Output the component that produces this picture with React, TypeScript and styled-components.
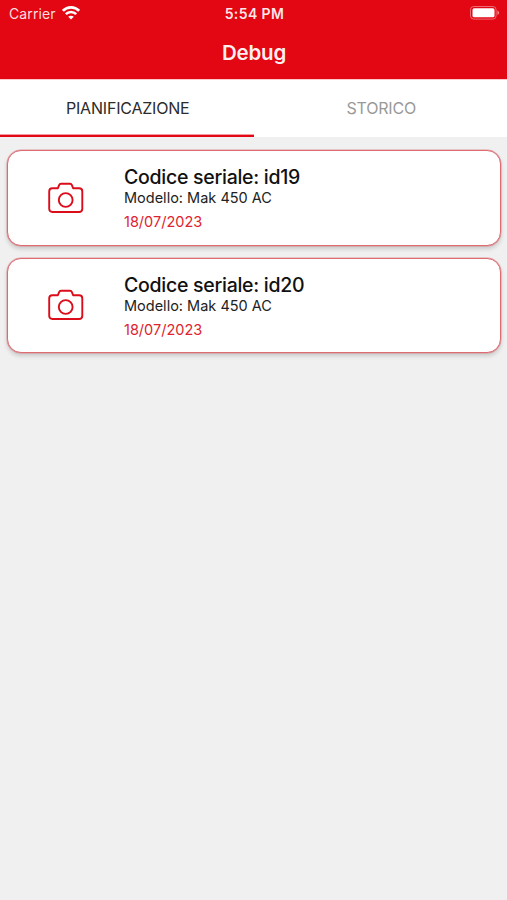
import { FunctionComponent } from 'react';
import styled, { createGlobalStyle, ThemeProvider } from 'styled-components';

const theme = {
    fonts: {
        base: `Inter, 'Liberation Sans', sans-serif`,
    },
    colors: {
        primary: '#e30613',
        background: '#f0f0f0',
        icon: '#dc0d1b',
        date: '#e0222e',
        border: '#dc6b72',
    },
};

const reports = [
    { serial: 'id19', model: 'Mak 450 AC', date: '18/07/2023' },
    { serial: 'id20', model: 'Mak 450 AC', date: '18/07/2023' },
];

const WifiIcon: FunctionComponent = () => (
    <svg width="18" height="14" viewBox="0 0 18 14" fill="none" stroke="#fff" strokeWidth="2.6">
        <path d="M0.9 4.8C5.3 0.2 12.7 0.2 17.1 4.8" />
        <path d="M3.8 8.2C6.7 5.3 11.3 5.3 14.2 8.2" />
        <path d="M9 13.6L6.2 10.8C7.8 9.4 10.2 9.4 11.8 10.8Z" fill="#fff" stroke="none" />
    </svg>
);

const BatteryIcon: FunctionComponent = () => (
    <svg width="30" height="14" viewBox="0 0 30 14">
        <rect x="0.5" y="0.5" width="25.6" height="12.6" rx="3.2" fill="none" stroke="#fff" strokeOpacity="0.4" />
        <rect x="2.5" y="2.3" width="22" height="9" rx="1.6" fill="#fff" />
        <path d="M27.4 4.6C29.8 5.4 29.8 8.2 27.4 9Z" fill="#fff" fillOpacity="0.5" />
    </svg>
);

const CameraIcon: FunctionComponent = () => (
    <svg width="36" height="32" viewBox="0 0 36 32" fill="none" stroke={theme.colors.icon} strokeWidth="1.9">
        <path
            d="M4.4 6.2H9.9L11.1 3.1Q11.6 1.8 13 1.8H22Q23.4 1.8 23.9 3.1L25.1 6.2H31.1Q34.3 6.2 34.3 9.4V26.8Q34.3 30 31.1 30H4.4Q1.2 30 1.2 26.8V9.4Q1.2 6.2 4.4 6.2Z"
            strokeLinejoin="round"
        />
        <circle cx="17.7" cy="18" r="6.9" />
    </svg>
);

const App: FunctionComponent = () => (
    <ThemeProvider theme={theme}>
        <GlobalStyle />
        <Screen>
            <Header>
                <StatusBar>
                    <Carrier>
                        Carrier
                        <WifiIcon />
                    </Carrier>
                    <Clock>5:54 PM</Clock>
                    <Battery>
                        <BatteryIcon />
                    </Battery>
                </StatusBar>
                <Title>Debug</Title>
            </Header>
            <Tabs>
                <Tab $active>PIANIFICAZIONE</Tab>
                <Tab>STORICO</Tab>
            </Tabs>
            <List>
                {reports.map(({ serial, model, date }) => (
                    <Card key={serial}>
                        <IconBox>
                            <CameraIcon />
                        </IconBox>
                        <Details>
                            <Serial>Codice seriale: {serial}</Serial>
                            <Model>Modello: {model}</Model>
                            <DateText>{date}</DateText>
                        </Details>
                    </Card>
                ))}
            </List>
        </Screen>
    </ThemeProvider>
);

export default App;

const GlobalStyle = createGlobalStyle`
    * {
        box-sizing: border-box;
    }

    body {
        margin: 0;
        font-family: ${theme.fonts.base};
        background: ${theme.colors.background};
    }
`;

const Screen = styled.div`
    display: flex;
    flex-direction: column;
    height: 900px;
    overflow: hidden;
    background: ${({ theme }) => theme.colors.background};
`;

const Header = styled.header`
    height: 78.5px;
    color: white;
    background: ${({ theme }) => theme.colors.primary};
`;

const StatusBar = styled.div`
    display: grid;
    grid-template-columns: 1fr auto 1fr;
    align-items: center;
    height: 26px;
    padding: 0 7px 0 9px;
`;

const Carrier = styled.div`
    display: flex;
    align-items: center;
    gap: 6px;
    font-size: 14px;
    letter-spacing: 0.1px;
    color: rgba(255, 255, 255, 0.88);
`;

const Clock = styled.div`
    padding-top: 1px;
    font-size: 14px;
    font-weight: 600;
    letter-spacing: 0.4px;
    color: rgba(255, 255, 255, 0.92);
`;

const Battery = styled.div`
    display: flex;
    justify-content: flex-end;
`;

const Title = styled.h1`
    margin: 0;
    padding-left: 1px;
    line-height: 54px;
    font-size: 20.5px;
    font-weight: 600;
    letter-spacing: -0.2px;
    text-align: center;
    color: rgba(255, 255, 255, 0.95);
`;

const Tabs = styled.nav`
    display: flex;
    height: 58.5px;
    background: white;
    border-top: 1px solid #fbc8cb;
`;

const Tab = styled.div<{ $active?: boolean }>`
    display: flex;
    flex: 1;
    align-items: center;
    justify-content: center;
    padding: 2px 0 0 2px;
    font-size: 16px;
    letter-spacing: -0.2px;
    color: ${({ $active }) => ($active ? '#2b2b2b' : '#999')};
    border-bottom: 2px solid ${({ $active, theme }) => ($active ? theme.colors.primary : 'transparent')};
    box-shadow: ${({ $active }) => ($active ? 'inset 0 -1px 0 rgba(227, 6, 19, 0.4)' : 'none')};
`;

const List = styled.main`
    display: flex;
    flex-direction: column;
    gap: 12px;
    padding: 13px 6px 0 7px;
`;

const Card = styled.article`
    display: flex;
    height: 95.5px;
    background: white;
    border: 1px solid ${({ theme }) => theme.colors.border};
    border-radius: 14px;
    box-shadow:
        0 0 0 0.5px rgba(220, 107, 114, 0.6),
        0 3px 4px rgba(0, 0, 0, 0.16);
`;

const IconBox = styled.div`
    display: flex;
    align-items: center;
    justify-content: center;
    width: 116px;
`;

const Details = styled.div`
    padding-top: 14px;
    white-space: nowrap;
`;

const Serial = styled.div`
    line-height: 25px;
    font-size: 19.5px;
    font-weight: 500;
    letter-spacing: -0.27px;
    color: #111;
`;

const Model = styled.div`
    line-height: 16px;
    font-size: 14.5px;
    color: #222;
`;

const DateText = styled.div`
    padding-top: 7px;
    line-height: 18px;
    font-size: 14.5px;
    color: ${({ theme }) => theme.colors.date};
`;
